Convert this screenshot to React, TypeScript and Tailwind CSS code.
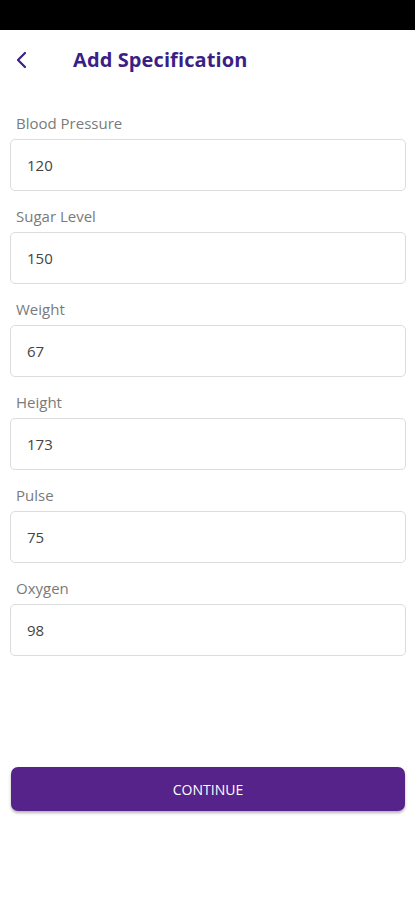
import React from "react";

const fields = [
  { label: "Blood Pressure", value: "120" },
  { label: "Sugar Level", value: "150" },
  { label: "Weight", value: "67" },
  { label: "Height", value: "173" },
  { label: "Pulse", value: "75" },
  { label: "Oxygen", value: "98" },
];

export default function App() {
  return (
    <div
      className="w-[415px] h-[900px] bg-white flex flex-col"
      style={{ fontFamily: '"Open Sans", "Noto Sans", sans-serif' }}
    >
      <div className="h-[30px] bg-black shrink-0" />
      <div className="h-[60px] flex items-center shrink-0">
        <div className="w-[73px] pl-[14px] flex items-center">
          <svg width="16" height="20" viewBox="0 0 16 20" fill="none">
            <path d="M11 3 L4 10 L11 17" stroke="#3b1f86" strokeWidth="2.2" strokeLinecap="round" strokeLinejoin="round" />
          </svg>
        </div>
        <div className="text-[20px] font-bold text-[#3b1f86] leading-none tracking-[0.1px]">Add Specification</div>
      </div>
      <div className="flex flex-col pl-[10px] pr-[9px] pt-[23px] gap-[15px]">
        {fields.map((f) => (
          <div key={f.label} className="flex flex-col">
            <div className="text-[15px] leading-[20px] text-[#7a7a7a] pl-[6px] mb-[6px]">{f.label}</div>
            <div className="h-[52px] border border-[#dcdcdc] rounded-[5px] flex items-center px-[16px] text-[15px] text-[#444]">
              {f.value}
            </div>
          </div>
        ))}
      </div>
      <div className="flex-1" />
      <div className="pl-[11px] pr-[10px] mb-[89px]">
        <div className="h-[44px] rounded-[7px] bg-[#55238a] flex items-center justify-center text-white text-[14px] shadow-[0_2px_3px_rgba(0,0,0,0.3)]">
          CONTINUE
        </div>
      </div>
    </div>
  );
}
